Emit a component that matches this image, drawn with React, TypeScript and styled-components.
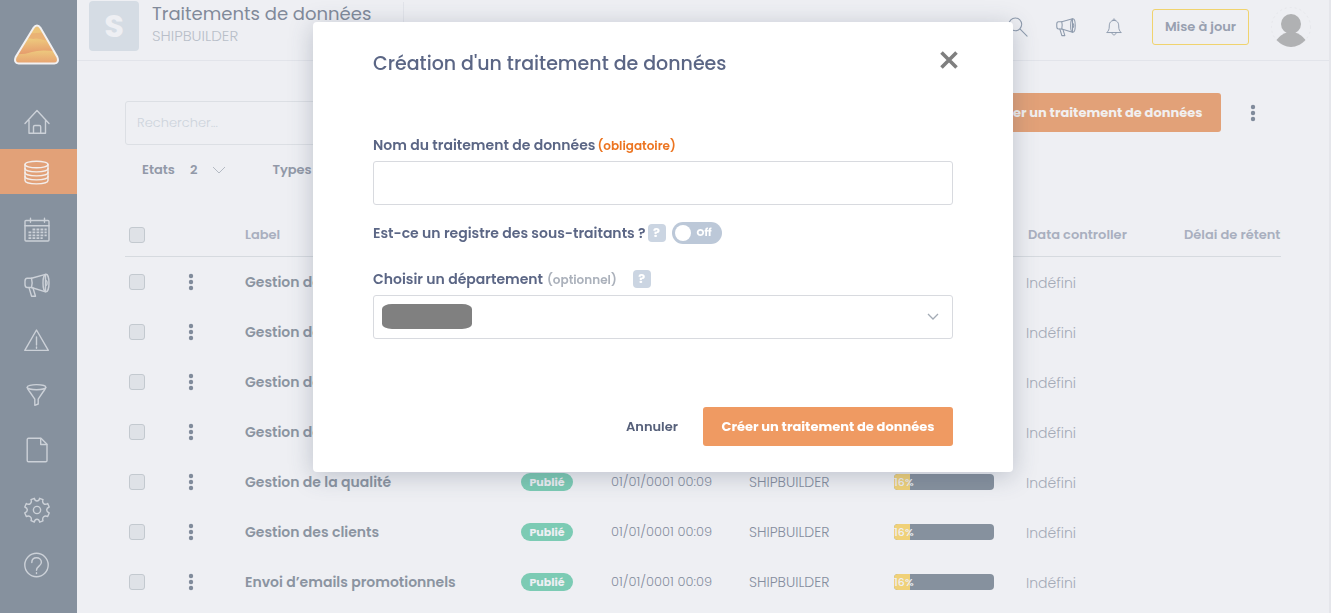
import React from "react";
import styled, { createGlobalStyle } from "styled-components";

const GlobalStyle = createGlobalStyle`
  * { box-sizing: border-box; }
  body {
    margin: 0;
    background: #eeeff3;
    font-family: Poppins, Inter, "Open Sans", sans-serif;
    font-size: 14px;
    color: #8b94a5;
  }
  button, input, select { font-family: inherit; }
  button { cursor: pointer; }
`;

/* ---------- shell ---------- */

const Page = styled.div`
  display: flex;
  min-height: 100vh;
`;

const Sidebar = styled.nav`
  flex: none;
  width: 77px;
  background: #86919e;
  display: flex;
  flex-direction: column;
`;

const LogoLink = styled.a`
  display: flex;
  justify-content: center;
  height: 94px;
  padding: 22px 4px 0 0;
`;

const NavLink = styled.a<{ $active?: boolean; $spaced?: boolean }>`
  display: flex;
  align-items: center;
  justify-content: center;
  height: ${(p) => (p.$active ? 45 : 55)}px;
  margin-top: ${(p) => (p.$spaced ? 5 : 0)}px;
  margin-bottom: ${(p) => (p.$active ? 8 : 0)}px;
  padding: ${(p) => (p.$active ? "2px 4px 0 0" : "0 4px 0 0")};
  background: ${(p) => (p.$active ? "#e2a178" : "transparent")};
  color: ${(p) => (p.$active ? "#f3eeec" : "#ccd1d8")};
`;

const Main = styled.main`
  flex: 1;
  min-width: 0;
  border-right: 2px solid #e5e6eb;
`;

/* ---------- header ---------- */

const Header = styled.header`
  display: flex;
  align-items: center;
  height: 61px;
  padding: 0 18px 8px 12px;
  border-bottom: 1px solid #e2e4ea;
`;

const Initial = styled.div`
  display: flex;
  align-items: center;
  justify-content: center;
  width: 50px;
  height: 50px;
  border-radius: 4px;
  background: #d5dce4;
  color: #eeeff3;
  font-size: 32px;
  font-weight: 700;
`;

const Titles = styled.div`
  margin-left: 13px;
  padding: 0 32px 4px 0;
  border-right: 1px solid #e2e4ea;
`;

const PageTitle = styled.h1`
  margin: 0;
  font-size: 18px;
  line-height: 24px;
  font-weight: 400;
  color: #818a9a;
`;

const Company = styled.p`
  margin: 0;
  font-size: 15px;
  line-height: 20px;
  font-weight: 300;
  color: #b9bfc9;
`;

const HeaderActions = styled.div`
  display: flex;
  align-items: center;
  gap: 28px;
  margin-left: auto;
  padding-top: 2px;
`;

const IconButton = styled.button`
  display: flex;
  align-items: center;
  justify-content: center;
  width: 20px;
  height: 24px;
  padding: 0;
  border: 0;
  background: none;
  color: #8e9bad;
`;

const UpdateButton = styled.button`
  width: 97px;
  height: 36px;
  padding: 0;
  border: 1px solid #f0d36e;
  border-radius: 3px;
  background: none;
  color: #98a0b0;
  font-size: 13px;
  font-weight: 600;
`;

const AvatarButton = styled(IconButton)`
  width: 40px;
  height: 40px;
  margin-left: -6px;
`;

/* ---------- list ---------- */

const Content = styled.section`
  padding: 32px 48px 0;
`;

const Toolbar = styled.div`
  display: flex;
  align-items: flex-start;
  justify-content: space-between;
`;

const SearchInput = styled.input`
  flex: 0 1 420px;
  min-width: 0;
  height: 44px;
  margin-top: 8px;
  padding: 0 11px;
  border: 1px solid #dcdfe4;
  border-radius: 3px;
  background: none;
  font-size: 13px;
  font-weight: 300;
  &::placeholder { color: #cdd4dc; opacity: 1; }
`;

const ToolbarActions = styled.div`
  display: flex;
  align-items: center;
  gap: 20px;
  padding-right: 16px;
`;

const PrimaryButton = styled.button<{ $muted?: boolean }>`
  width: 250px;
  height: 39px;
  padding: 0;
  border: 0;
  border-radius: 3px;
  background: ${(p) => (p.$muted ? "#e2a178" : "#ef9a62")};
  color: ${(p) => (p.$muted ? "#f1efef" : "#ffffff")};
  font-size: 13px;
  font-weight: 700;
  white-space: nowrap;
`;

const KebabButton = styled(IconButton)`
  width: 24px;
  color: #808b9b;
`;

const RowMenu = styled(KebabButton)`
  margin-left: -12px;
`;

const Filters = styled.div`
  display: flex;
  align-items: center;
  gap: 46px;
  height: 50px;
  padding-left: 17px;
`;

const FilterButton = styled.button`
  display: flex;
  align-items: center;
  gap: 15px;
  padding: 0;
  border: 0;
  background: none;
  color: #9299a8;
  font-size: 13px;
  font-weight: 600;
`;

const TableFrame = styled.div`
  margin-top: 19px;
  overflow: hidden;
`;

const Table = styled.table`
  width: 100%;
  min-width: 1216px;
  table-layout: fixed;
  border-collapse: separate;
  border-spacing: 0;
`;

const Col = styled.col<{ $w?: number }>`
  width: ${(p) => (p.$w ? `${p.$w}px` : "auto")};
`;

const HeadCell = styled.th`
  height: 43px;
  padding: 0 12px;
  border-bottom: 1px solid #d6dadf;
  text-align: left;
  white-space: nowrap;
  font-size: 13px;
  font-weight: 600;
  color: #a9afbf;
  &:first-child { padding: 0 4px; }
`;

const Cell = styled.td`
  height: 50px;
  padding: 0 12px;
  white-space: nowrap;
  font-size: 13px;
  font-weight: 300;
  color: #858d9e;
  &:first-child { padding: 0 4px; }
`;

const NameCell = styled(Cell)`
  font-size: 14px;
  font-weight: 600;
  color: #8b94a1;
`;

const OwnerCell = styled(Cell)`
  font-size: 14px;
`;

const MutedCell = styled(Cell)`
  padding: 2px 10px 0;
  font-size: 14px;
  color: #a4aab7;
`;

const Checkbox = styled.input`
  appearance: none;
  display: block;
  width: 16px;
  height: 16px;
  margin: 0;
  border: 1px solid #c3c9cf;
  border-radius: 3px;
  background: #dfe2e7;
`;

const Badge = styled.span`
  display: flex;
  align-items: center;
  justify-content: center;
  width: 52px;
  height: 18px;
  border-radius: 9px;
  background: #7ccbb4;
  color: #eeeff3;
  font-size: 11px;
  font-weight: 700;
`;

const Track = styled.div`
  width: 100px;
  height: 16px;
  border-radius: 4px;
  overflow: hidden;
  background: #86919e;
`;

const Fill = styled.div`
  height: 100%;
  background: #f0d178;
  color: #eeeff3;
  font-size: 11px;
  line-height: 16px;
  font-weight: 500;
`;

/* ---------- dialog ---------- */

const Overlay = styled.div`
  position: fixed;
  inset: 0;
  display: flex;
  align-items: flex-start;
  justify-content: center;
  padding: 22px 5px 0 0;
`;

const Dialog = styled.div`
  width: 700px;
  max-width: 100%;
  padding: 24px 60px 26px;
  border-radius: 4px;
  background: #ffffff;
  box-shadow: 0 4px 24px rgba(60, 75, 100, 0.28);
  color: #56617f;
`;

const DialogHead = styled.div`
  display: flex;
  align-items: center;
  justify-content: space-between;
  height: 32px;
  margin-bottom: 57px;
`;

const DialogTitle = styled.h2`
  margin: 0;
  padding-top: 4px;
  font-size: 19px;
  line-height: 28px;
  font-weight: 500;
  color: #5b6685;
`;

const CloseButton = styled(IconButton)`
  height: 20px;
  margin: 0 -6px 4px 0;
  color: #7f7f7f;
`;

const FieldLabel = styled.label`
  font-size: 14px;
  line-height: 20px;
  font-weight: 600;
  color: #5b6685;
`;

const FieldHead = styled.div`
  display: flex;
  align-items: center;
  height: 20px;
  margin-bottom: 6px;
`;

const Note = styled.span<{ $required?: boolean }>`
  margin-left: ${(p) => (p.$required ? 2 : 4)}px;
  padding-top: 2px;
  font-size: 12px;
  font-weight: 600;
  color: ${(p) => (p.$required ? "#ec7420" : "#abb1bb")};
`;

const Help = styled.button<{ $gap: number }>`
  width: 18px;
  height: 18px;
  margin-left: ${(p) => p.$gap}px;
  padding: 0;
  border: 0;
  border-radius: 4px;
  background: #cbd5e2;
  color: #ffffff;
  font-size: 13px;
  line-height: 18px;
  font-weight: 700;
`;

const TextInput = styled.input`
  display: block;
  width: 100%;
  height: 44px;
  padding: 0 12px;
  border: 1px solid #d8dadf;
  border-radius: 3px;
  font-size: 14px;
`;

const SwitchRow = styled.div`
  display: flex;
  align-items: center;
  height: 22px;
  margin: 17px 0 25px;
`;

const Switch = styled.label`
  display: flex;
  align-items: center;
  gap: 6px;
  width: 50px;
  height: 22px;
  margin-left: 6px;
  padding-left: 3px;
  border-radius: 11px;
  background: #bcc8d8;
  color: #ffffff;
  font-size: 10px;
  font-weight: 700;
`;

const SwitchInput = styled.input`
  appearance: none;
  width: 16px;
  height: 16px;
  margin: 0;
  border-radius: 50%;
  background: #ffffff;
`;

const SelectFrame = styled.div`
  position: relative;
`;

const Select = styled.select`
  appearance: none;
  display: block;
  width: 100%;
  height: 44px;
  padding: 0 36px 0 12px;
  border: 1px solid #d8dadf;
  border-radius: 3px;
  background: #ffffff;
  font-size: 14px;
`;

const MaskedValue = styled.span`
  position: absolute;
  top: 9px;
  left: 9px;
  width: 90px;
  height: 25px;
  border-radius: 10px / 5px;
  background: #808080;
  pointer-events: none;
`;

const SelectArrow = styled.svg`
  position: absolute;
  top: 18px;
  right: 14px;
  pointer-events: none;
`;

const DialogFoot = styled.div`
  display: flex;
  align-items: center;
  justify-content: flex-end;
  gap: 25px;
  margin-top: 68px;
`;

const CancelButton = styled.button`
  padding: 0;
  border: 0;
  background: none;
  color: #56607a;
  font-size: 13px;
  font-weight: 600;
`;

/* ---------- icons ---------- */

function Icon({ size = 26, width = 1.4, children }: { size?: number; width?: number; children: React.ReactNode }) {
  return (
    <svg width={size} height={size} viewBox="0 0 26 26" fill="none" stroke="currentColor"
      strokeWidth={width} strokeLinejoin="round" strokeLinecap="round" aria-hidden="true">
      {children}
    </svg>
  );
}

const HomeShape = (
  <path d="M1 14.5 13 1.5l12 13M5 11v13.2h16.5V11M9.5 24v-6.200q0-1.300 1.300-1.300h4.600q1.300 0 1.300 1.300V24" />
);

const DatabaseShape = (
  <>
    <ellipse cx="12.500" cy="4.500" rx="11.500" ry="3.300" />
    <path d="M1 4.500v16c0 1.900 5 3.400 11.500 3.400S24 22.400 24 20.500v-16" />
    <path d="M1 8.500c0 1.900 5 3.400 11.500 3.400S24 10.400 24 8.500M1 12.500c0 1.900 5 3.400 11.500 3.400S24 14.400 24 12.500M1 16.500c0 1.900 5 3.400 11.500 3.400S24 18.400 24 16.500" />
  </>
);

const CalendarShape = (
  <>
    <rect x="1" y="3.500" width="24" height="20.500" rx="1" />
    <path d="M1 8.700h24M6.500 1.200v4M20.500 1.200v4" />
    <path strokeWidth="1.800" strokeLinecap="butt" strokeDasharray="2.800 1.200"
      d="M8.500 12.500h14.200M4.500 15.400h18.200M4.500 18.300h18.200M4.500 21.200h14.200" />
  </>
);

const MegaphoneShape = (
  <>
    <path d="M7.500 6.200 21.500 2.400v17.400L7.500 15.500H3.200Q1 15.500 1 12.500V9.200q0-3 2.200-3z" />
    <ellipse cx="22" cy="11" rx="3" ry="8.800" />
    <path d="M22 8.300c1.500.6 1.500 4.800 0 5.400M7.500 6.200q1.300 4.700 0 9.300M5 15.600l2.600 8.600h3.900L9 16" />
  </>
);

const WarningShape = (
  <>
    <path d="M12.500 3 24.300 23.400H.8z" />
    <path d="M12.500 10v8M12.500 20v1.200" />
  </>
);

const FunnelShape = (
  <>
    <ellipse cx="12.500" cy="5.200" rx="9.300" ry="2.600" />
    <path d="M3.200 5.400c.2 1.600 1.600 3 2.700 4.600l4.900 7.200v6.100l3.400-1.300v-4.800L19 10c1.200-1.700 2.600-3 2.800-4.600" />
  </>
);

const FileShape = (
  <>
    <path d="M4.500 1.300H17l6 6v16.200q0 1.300-1.300 1.300H4.500q-1.300 0-1.300-1.300V2.600q0-1.300 1.300-1.300z" />
    <path d="M16.700 1.500v6h6" />
  </>
);

const GearShape = (
  <>
    <circle cx="13" cy="13" r="3.600" />
    <path d="M10.300 1.300Q11 4 13 4t2.700-2.700l3.300 1.300q-1 2.600.7 4t4-.1l1.500 3.500q-2.500 1.100-2.500 3t2.500 3l-1.500 3.500q-2.400-1-4 .3t-.7 4l-3.300 1.400Q15 22.300 13 22.300t-2.700 2.700L7 23.700q1-2.700-.7-4t-4-.2L.8 16q2.500-1.100 2.500-3T.8 10l1.500-3.500q2.300 1.500 4 .1t.7-4z" />
  </>
);

const HelpShape = (
  <>
    <circle cx="12.500" cy="13" r="11.700" />
    <path d="M7.800 10.500c0-3 2-4.800 4.700-4.800s4.900 1.800 4.900 4.500c0 3.900-4.900 3.900-4.900 8M12.500 20.600v1" />
  </>
);

const SearchShape = (
  <>
    <circle cx="9.500" cy="9.500" r="8.300" />
    <path d="m15.800 15.800 9 9" />
  </>
);

const BellShape = (
  <>
    <path d="M13 3.500c-4.800 0-6.800 3.500-6.800 8 0 5.500-1.200 7-3.700 9.500h21c-2.500-2.500-3.700-4-3.700-9.500 0-4.500-2-8-6.800-8z" />
    <path d="M11.200 3.500c0-3 3.600-3 3.600 0M10 21.200c0 4.500 6 4.500 6 0" />
  </>
);

function Kebab() {
  return (
    <svg width="6" height="18" viewBox="0 0 6 18" fill="#808b9b" aria-hidden="true">
      <circle cx="3" cy="3" r="2.200" />
      <circle cx="3" cy="9" r="2.200" />
      <circle cx="3" cy="15" r="2.200" />
    </svg>
  );
}

function Logo() {
  const outline = "M19.300 6.200q3.700-5.200 7.400 0L43.300 35q2.200 6-3 6.500H4.700q-5.200-.5-3-6.500z";
  return (
    <svg width="46" height="44" viewBox="0 0 46 44" aria-hidden="true">
      <defs>
        <linearGradient id="logoTop" x1="0" y1="0" x2="0" y2="1">
          <stop offset="0" stopColor="#edc57b" />
          <stop offset="1" stopColor="#ecc07a" />
        </linearGradient>
        <linearGradient id="logoWave" x1="0.300" y1="0" x2="0.400" y2="1">
          <stop offset="0" stopColor="#eecb7e" />
          <stop offset="0.900" stopColor="#e59a6c" />
        </linearGradient>
        <linearGradient id="logoFoot" x1="0" y1="0" x2="0" y2="1">
          <stop offset="0" stopColor="#edc87d" />
          <stop offset="1" stopColor="#e69b6f" />
        </linearGradient>
        <clipPath id="logoClip"><path d={outline} /></clipPath>
      </defs>
      <g clipPath="url(#logoClip)">
        <path d="M0 0h46v44H0z" fill="url(#logoTop)" />
        <path d="M8 20.500V12l30-2v9q-4 1-7-.5t-8-2-11 3z" fill="#e7a671" opacity="0.600" />
        <path d="M0 21q9-5 16-4.500c7 .5 9 4.500 18 1.500l12 2v14H0z" fill="url(#logoWave)" />
        <path d="M0 32q9 1 18-2t28 0v14H0z" fill="url(#logoFoot)" />
      </g>
      <path d={outline} fill="none" stroke="#f2f1f2" strokeWidth="2" />
    </svg>
  );
}

function Avatar() {
  return (
    <svg width="40" height="40" viewBox="0 0 40 40" aria-hidden="true">
      <circle cx="20" cy="20" r="19.500" fill="none" stroke="#e6e7eb" strokeDasharray="2 3" />
      <circle cx="20" cy="17" r="10" fill="#b0b1b3" />
      <path d="M5.500 33Q10 27 16 25.500h8Q30 27 34.500 33 28 40 20 40T5.500 33z" fill="#b0b1b3" />
    </svg>
  );
}

/* ---------- data ---------- */

const NAV = [
  { label: "Accueil", shape: HomeShape },
  { label: "Traitements", shape: DatabaseShape, active: true },
  { label: "Calendrier", shape: CalendarShape },
  { label: "Annonces", shape: MegaphoneShape },
  { label: "Incidents", shape: WarningShape },
  { label: "Filtres", shape: FunnelShape },
  { label: "Documents", shape: FileShape },
  { label: "Paramètres", shape: GearShape, spaced: true },
  { label: "Aide", shape: HelpShape },
];

const COLUMNS = [54, 54, 276, 90, 138, 145, 134, 156, undefined];

const ROWS = [
  "Gestion des achats",
  "Gestion des contrats",
  "Gestion des stocks",
  "Gestion de la paie",
  "Gestion de la qualité",
  "Gestion des clients",
  "Envoi d’emails promotionnels",
].map((name) => ({ name, status: "Publié", date: "01/01/0001 00:09", owner: "SHIPBUILDER", progress: 16, controller: "Indéfini" }));

/* ---------- page ---------- */

function CreateDialog() {
  return (
    <Overlay>
      <Dialog role="dialog" aria-modal="true" aria-labelledby="dialog-title">
        <DialogHead>
          <DialogTitle id="dialog-title">Création d'un traitement de données</DialogTitle>
          <CloseButton type="button" aria-label="Fermer">
            <svg width="20" height="20" viewBox="0 0 20 20" stroke="currentColor" strokeWidth="3.600" aria-hidden="true">
              <path d="m2.500 2.500 15 15M17.500 2.500l-15 15" />
            </svg>
          </CloseButton>
        </DialogHead>

        <FieldHead>
          <FieldLabel htmlFor="name">Nom du traitement de données</FieldLabel>
          <Note $required>(obligatoire)</Note>
        </FieldHead>
        <TextInput id="name" type="text" />

        <SwitchRow>
          <FieldLabel htmlFor="processor">Est-ce un registre des sous-traitants ?</FieldLabel>
          <Help type="button" $gap={2}>?</Help>
          <Switch>
            <SwitchInput id="processor" type="checkbox" />
            Off
          </Switch>
        </SwitchRow>

        <FieldHead>
          <FieldLabel htmlFor="department">Choisir un département</FieldLabel>
          <Note>(optionnel)</Note>
          <Help type="button" $gap={16}>?</Help>
        </FieldHead>
        <SelectFrame>
          <Select id="department" defaultValue="">
            <option value="" />
          </Select>
          <MaskedValue />
          <SelectArrow width="12" height="8" viewBox="0 0 12 8" fill="none" stroke="#a3abb5" strokeWidth="1.300">
            <path d="m1 1 5 5 5-5" />
          </SelectArrow>
        </SelectFrame>

        <DialogFoot>
          <CancelButton type="button">Annuler</CancelButton>
          <PrimaryButton type="button">Créer un traitement de données</PrimaryButton>
        </DialogFoot>
      </Dialog>
    </Overlay>
  );
}

export default function App() {
  return (
    <>
      <GlobalStyle />
      <Page>
        <Sidebar>
          <LogoLink href="#" aria-label="Tableau de bord"><Logo /></LogoLink>
          {NAV.map((item) => (
            <NavLink key={item.label} href="#" aria-label={item.label} $active={item.active} $spaced={item.spaced}>
              <Icon>{item.shape}</Icon>
            </NavLink>
          ))}
        </Sidebar>

        <Main>
          <Header>
            <Initial>S</Initial>
            <Titles>
              <PageTitle>Traitements de données</PageTitle>
              <Company>SHIPBUILDER</Company>
            </Titles>
            <HeaderActions>
              <IconButton type="button" aria-label="Rechercher"><Icon size={20}>{SearchShape}</Icon></IconButton>
              <IconButton type="button" aria-label="Annonces"><Icon size={20}>{MegaphoneShape}</Icon></IconButton>
              <IconButton type="button" aria-label="Notifications"><Icon size={18}>{BellShape}</Icon></IconButton>
              <UpdateButton type="button">Mise à jour</UpdateButton>
              <AvatarButton type="button" aria-label="Profil"><Avatar /></AvatarButton>
            </HeaderActions>
          </Header>

          <Content>
            <Toolbar>
              <SearchInput type="text" placeholder="Rechercher..." aria-label="Rechercher" />
              <ToolbarActions>
                <PrimaryButton type="button" $muted>Créer un traitement de données</PrimaryButton>
                <KebabButton type="button" aria-label="Plus"><Kebab /></KebabButton>
              </ToolbarActions>
            </Toolbar>

            <Filters>
              <FilterButton type="button">
                <span>Etats</span>
                <span>2</span>
                <svg width="14" height="8" viewBox="0 0 14 8" fill="none" stroke="#b4bac3" aria-hidden="true">
                  <path d="m1 1 6 6 6-6" />
                </svg>
              </FilterButton>
              <FilterButton type="button">Types</FilterButton>
            </Filters>

            <TableFrame>
              <Table>
                <colgroup>
                  {COLUMNS.map((w, i) => <Col key={i} $w={w} />)}
                </colgroup>
                <thead>
                  <tr>
                    <HeadCell><Checkbox type="checkbox" aria-label="Tout sélectionner" /></HeadCell>
                    <HeadCell />
                    <HeadCell>Label</HeadCell>
                    <HeadCell>Etat</HeadCell>
                    <HeadCell>Date</HeadCell>
                    <HeadCell>Société</HeadCell>
                    <HeadCell>Progrès</HeadCell>
                    <HeadCell>Data controller</HeadCell>
                    <HeadCell>Délai de rétention</HeadCell>
                  </tr>
                </thead>
                <tbody>
                  {ROWS.map((row) => (
                    <tr key={row.name}>
                      <Cell><Checkbox type="checkbox" aria-label={row.name} /></Cell>
                      <Cell>
                        <RowMenu type="button" aria-label="Actions"><Kebab /></RowMenu>
                      </Cell>
                      <NameCell>{row.name}</NameCell>
                      <Cell><Badge>{row.status}</Badge></Cell>
                      <Cell>{row.date}</Cell>
                      <OwnerCell>{row.owner}</OwnerCell>
                      <Cell>
                        <Track><Fill style={{ width: `${row.progress}%` }}>{row.progress}%</Fill></Track>
                      </Cell>
                      <MutedCell>{row.controller}</MutedCell>
                      <Cell />
                    </tr>
                  ))}
                </tbody>
              </Table>
            </TableFrame>
          </Content>
        </Main>
      </Page>
      <CreateDialog />
    </>
  );
}
